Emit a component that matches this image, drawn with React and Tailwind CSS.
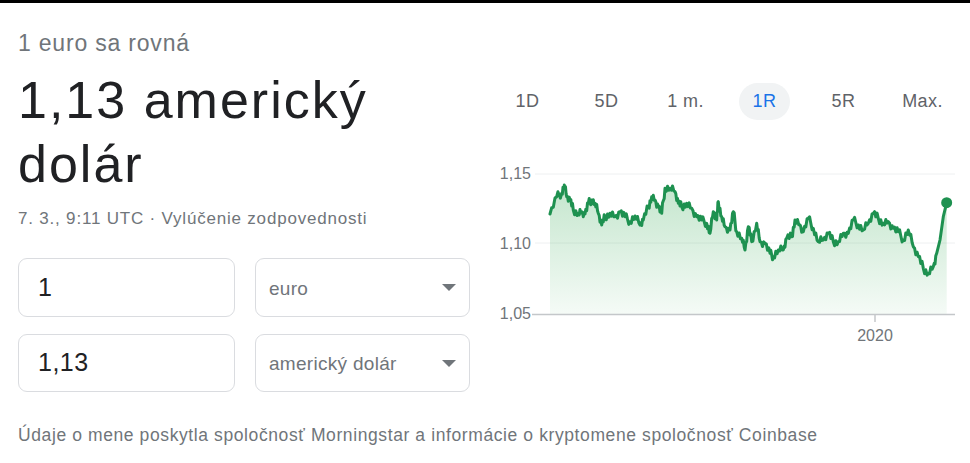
import React from 'react'

const raw = [
  [195,462],[215,410],[230,400],[238,375],[245,410],[255,420],[265,450],[280,460],[290,455],[300,462],
  [310,430],[320,420],[330,430],[340,460],[350,495],[360,470],[375,460],[390,470],[405,455],[420,470],
  [435,485],[450,468],[465,495],[475,480],[490,440],[500,410],[510,420],[520,440],[530,460],[540,385],
  [555,385],[570,395],[580,430],[590,440],[605,430],[620,445],[635,470],[650,480],[665,490],[675,520],
  [685,455],[695,480],[700,425],[710,470],[720,500],[735,510],[745,455],[755,515],[770,535],[780,570],
  [790,500],[800,545],[815,490],[825,545],[840,550],[855,580],[865,590],[880,570],[895,570],[905,535],
  [920,530],[930,480],[945,495],[955,515],[970,475],[985,505],[1000,545],[1015,540],[1030,520],[1045,545],
  [1060,545],[1075,520],[1090,520],[1105,480],[1120,495],[1135,510],[1150,490],[1165,460],[1180,475],
  [1195,490],[1210,485],[1225,505],[1240,515],[1255,540],[1270,510],[1285,560],[1300,590],[1315,625],
  [1330,640],[1345,620],[1355,580],[1365,540],[1375,470],[1385,428],
]

// reference zoom coords -> page coords, with some jitter in between
const pts = []
raw.forEach(([zx, zy], i) => {
  const x = 485 + zx / 3, y = 60 + zy / 3
  if (i > 0 && i < raw.length - 3) {
    const [px, py] = pts[pts.length - 1]
    for (let k = 1; k <= 3; k++) {
      const t = k / 4
      const j = (((i * 7 + k * 13) % 9) - 4) * 1.0
      pts.push([px + (x - px) * t, py + (y - py) * t + j])
    }
  }
  pts.push([x, y])
})

const line = pts.map(([x, y], i) => `${i ? 'L' : 'M'}${x.toFixed(1)} ${y.toFixed(1)}`).join(' ')
const last = pts[pts.length - 1]
const area = `${line} L${last[0].toFixed(1)} 314 L${pts[0][0].toFixed(1)} 314 Z`

const tabs = ['1D', '5D', '1 m.', '1R', '5R', 'Max.']

function Caret() {
  return (
    <svg width="14" height="7" viewBox="0 0 14 7" className="shrink-0">
      <path d="M0 0 L14 0 L7 7 Z" fill="#70757a" />
    </svg>
  )
}

function Chart() {
  return (
    <svg width="485" height="200" viewBox="485 150 485 200" className="block">
      <defs>
        <linearGradient id="fillG" x1="0" y1="180" x2="0" y2="314" gradientUnits="userSpaceOnUse">
          <stop offset="0" stopColor="#34a853" stopOpacity="0.3" />
          <stop offset="1" stopColor="#34a853" stopOpacity="0.05" />
        </linearGradient>
      </defs>
      <line x1="535" y1="174" x2="955" y2="174" stroke="#eef0f1" strokeWidth="1" />
      <line x1="535" y1="243" x2="955" y2="243" stroke="#eef0f1" strokeWidth="1" />
      <g fill="#70757a" fontSize="16" fontFamily="'Liberation Sans', Arial, sans-serif" textAnchor="end">
        <text x="531" y="179">1,15</text>
        <text x="531" y="249">1,10</text>
        <text x="531" y="319">1,05</text>
        <text x="875" y="341" textAnchor="middle">2020</text>
      </g>
      <path d={area} fill="url(#fillG)" />
      <line x1="532" y1="314.5" x2="955" y2="314.5" stroke="#c4c7ca" strokeWidth="1.5" />
      <line x1="875" y1="314" x2="875" y2="322" stroke="#c4c7ca" strokeWidth="1.5" />
      <path d={line} fill="none" stroke="#1e9150" strokeWidth="3" strokeLinejoin="round" strokeLinecap="round" />
      <circle cx={last[0]} cy={last[1]} r="5.5" fill="#1e9150" />
    </svg>
  )
}

export default function App() {
  return (
    <div className="w-[970px] h-[463px] bg-white overflow-hidden">
      <div className="h-[3px] bg-black" />
      <div className="flex font-['Liberation_Sans',Arial,sans-serif]">
        {/* left: result + converter */}
        <div className="w-[485px] shrink-0 pl-[18px]">
          <div className="mt-[26px] text-[23px] leading-[28px] tracking-[0.8px] text-[#70757a]">1 euro sa rovná</div>
          <div className="mt-[11px] w-[440px] text-[52px] leading-[64px] tracking-[2px] text-[#202124]">
            1,13 americký dolár
          </div>
          <div className="mt-[13px] text-[17px] leading-[20px] tracking-[0.8px] text-[#70757a]">
            7. 3., 9:11 UTC · Vylúčenie zodpovednosti
          </div>

          <div className="mt-[29px] flex flex-col gap-[17px] w-[452px]">
            <div className="flex gap-[20px]">
              <div className="w-[217px] h-[59px] rounded-[9px] border border-[#dadce0] flex items-center pl-[19px] text-[25px] text-[#202124]">1</div>
              <div className="w-[215px] h-[59px] rounded-[9px] border border-[#dadce0] flex items-center justify-between pl-[13px] pr-[13px] text-[19px] tracking-[0.3px] text-[#70757a]">
                <span className="pt-[3px]">euro</span>
                <Caret />
              </div>
            </div>
            <div className="flex gap-[20px]">
              <div className="w-[217px] h-[58px] rounded-[9px] border border-[#dadce0] flex items-center pl-[19px] text-[25px] tracking-[0.5px] text-[#202124]">1,13</div>
              <div className="w-[215px] h-[58px] rounded-[9px] border border-[#dadce0] flex items-center justify-between pl-[13px] pr-[13px] text-[19px] tracking-[0.3px] text-[#70757a]">
                <span className="pt-[2px]">americký dolár</span>
                <Caret />
              </div>
            </div>
          </div>
        </div>

        {/* right: range tabs + chart */}
        <div className="flex-1">
          <div className="mt-[80px] ml-[3px] w-[474px] grid grid-cols-6">
            {tabs.map(t => (
              <div key={t} className="h-[37px] flex items-center justify-center">
                <span className={`h-[37px] px-[14px] rounded-full flex items-center text-[18px] tracking-[0.4px] ${t === '1R' ? 'bg-[#f1f3f4] text-[#1a73e8]' : 'text-[#5f6368]'}`}>{t}</span>
              </div>
            ))}
          </div>
          <div className="mt-[30px]">
            <Chart />
          </div>
        </div>
      </div>

      <div className="mt-[32px] pl-[18px] font-['Liberation_Sans',Arial,sans-serif] text-[17.5px] leading-[22px] tracking-[0.6px] text-[#70757a]">
        Údaje o mene poskytla spoločnosť Morningstar a informácie o kryptomene spoločnosť Coinbase
      </div>
    </div>
  )
}
